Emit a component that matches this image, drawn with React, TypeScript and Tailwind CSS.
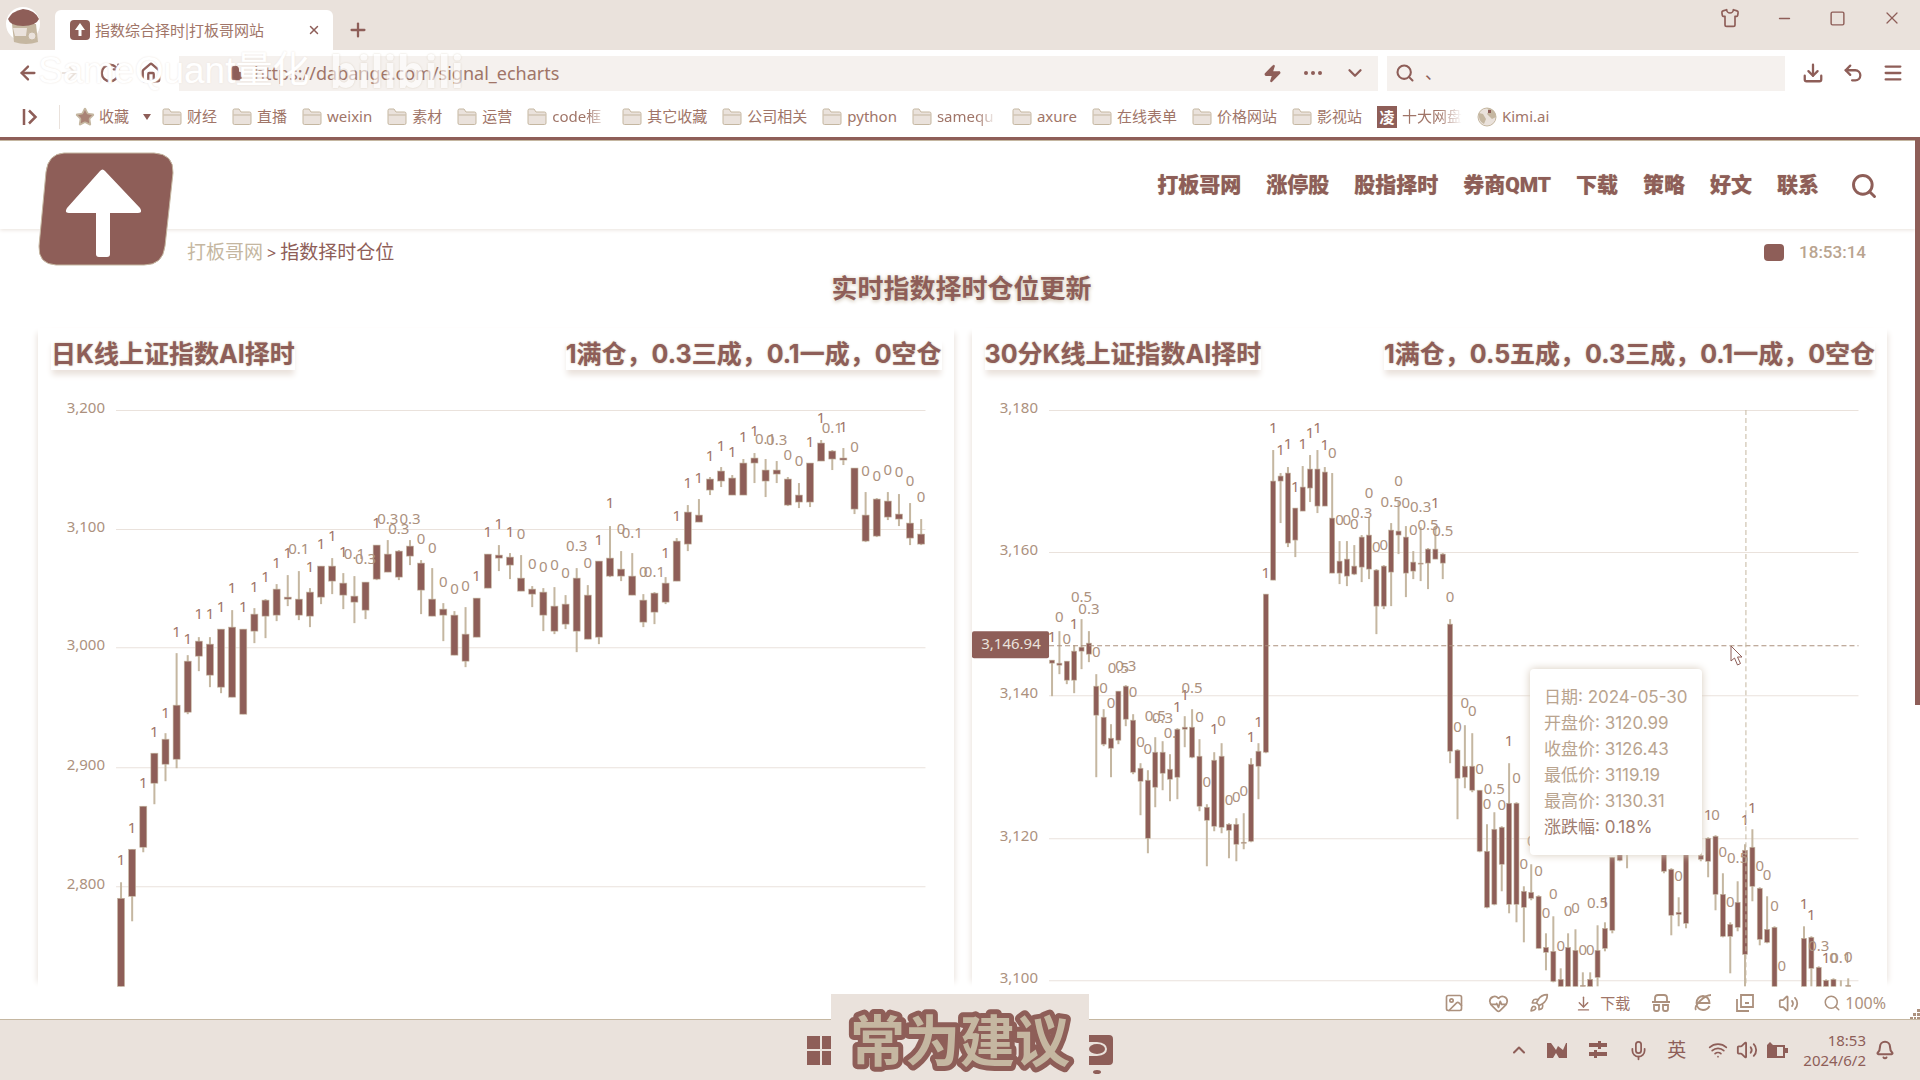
import React from "react";
import {
  ArrowDownToLine,
  ArrowLeft,
  ArrowRight,
  Bell,
  ChevronDown,
  ChevronUp,
  Download,
  HeartPulse,
  Home,
  Image as ImageIcon,
  Lock,
  Menu,
  Mic,
  Minus,
  Plus,
  Rocket,
  RotateCw,
  Search,
  Shirt,
  Square,
  Star,
  Undo2,
  Volume2,
  Wifi,
  X,
  Zap,
} from "lucide-react";

const DARK = "#8e5e58";
const TAN = "#c5b7a1";
const LIGHT = "#eae2dc";
const LABEL = "#ac917e";

// slot, high, open/close top, open/close bottom, low, label, label centre
type Candle = [number, number, number, number, number, string, number];

const daily: Candle[] = [
  [0, 882, 898, 986, 986, "1", 860],
  [1, 849, 849, 896, 921, "1", 828],
  [2, 806, 806, 847, 852, "1", 783],
  [3, 753, 753, 783, 804, "1", 732],
  [4, 733, 739, 764, 781, "1", 713],
  [5, 653, 705, 759, 768, "1", 632],
  [6, 655, 661, 712, 714, "1", 639],
  [7, 637, 641, 656, 671, "1", 614],
  [8, 637, 644, 675, 687, "1", 614],
  [9, 629, 629, 687, 693, "1", 607],
  [10, 610, 627, 697, 697, "1", 588],
  [11, 629, 629, 714, 714, "1", 607],
  [12, 608, 614, 631, 643, "1", 587],
  [13, 599, 600, 616, 638, "1", 577],
  [14, 584, 589, 615, 621, "1", 563],
  [15, 575, 597, 599, 606, "1", 553],
  [16, 571, 599, 615, 620, "0.1", 549],
  [17, 588, 592, 616, 627, "1", 567],
  [18, 566, 566, 597, 604, "1", 544],
  [19, 558, 566, 581, 594, "1", 536],
  [20, 573, 583, 595, 609, "1", 552],
  [21, 576, 596, 602, 623, "0.1", 554],
  [22, 582, 582, 610, 619, "0.3", 559],
  [23, 545, 545, 579, 580, "1", 523],
  [24, 540, 554, 572, 572, "0.3", 519],
  [25, 550, 551, 577, 580, "0.3", 529],
  [26, 540, 546, 556, 565, "0.3", 519],
  [27, 560, 563, 590, 614, "0", 539],
  [28, 568, 599, 616, 616, "0", 548],
  [29, 603, 609, 615, 641, "0", 582],
  [30, 611, 615, 655, 655, "0", 589],
  [31, 607, 634, 661, 667, "0", 586],
  [32, 598, 598, 637, 637, "1", 576],
  [33, 554, 554, 588, 588, "1", 532],
  [34, 545, 555, 558, 571, "1", 524],
  [35, 553, 557, 565, 579, "1", 532],
  [36, 555, 578, 591, 591, "0", 534],
  [37, 586, 589, 594, 607, "0", 564],
  [38, 588, 592, 615, 631, "0", 567],
  [39, 587, 606, 631, 634, "0", 565],
  [40, 595, 604, 624, 629, "0", 573],
  [41, 568, 578, 631, 652, "0.3", 546],
  [42, 585, 595, 639, 639, "0", 563],
  [43, 561, 561, 637, 644, "1", 540],
  [44, 526, 558, 576, 577, "1", 503],
  [45, 551, 569, 576, 581, "0", 529],
  [46, 553, 576, 595, 595, "0.1", 533],
  [47, 594, 600, 622, 627, "0", 572],
  [48, 592, 593, 612, 624, "0.1", 572],
  [49, 577, 583, 602, 604, "1", 553],
  [50, 538, 541, 581, 581, "1", 516],
  [51, 505, 512, 544, 551, "1", 483],
  [52, 499, 515, 522, 522, "1", 478],
  [53, 477, 479, 490, 495, "1", 456],
  [54, 467, 471, 481, 487, "1", 446],
  [55, 475, 478, 495, 495, "1", 452],
  [56, 459, 463, 495, 495, "1", 437],
  [57, 453, 458, 463, 483, "1", 431],
  [58, 459, 470, 481, 497, "0.1", 439],
  [59, 461, 470, 474, 483, "0.3", 440],
  [60, 477, 479, 505, 506, "0", 455],
  [61, 483, 495, 502, 508, "0", 461],
  [62, 463, 463, 502, 507, "1", 442],
  [63, 440, 443, 461, 461, "1", 418],
  [64, 450, 451, 459, 470, "0.1", 428],
  [65, 448, 458, 460, 465, "1", 427],
  [66, 468, 468, 509, 514, "0", 447],
  [67, 492, 515, 541, 542, "0", 471],
  [68, 498, 499, 536, 537, "0", 476],
  [69, 492, 501, 517, 520, "0", 470],
  [70, 494, 514, 519, 526, "0", 472],
  [71, 503, 523, 538, 545, "0", 481],
  [72, 519, 534, 544, 545, "0", 497],
];

const halfHour: Candle[] = [
  [0, 660, 660, 663, 696, "1", 637],
  [1, 631, 663, 665, 674, "0", 617],
  [2, 661, 661, 680, 684, "0", 639],
  [3, 645, 651, 680, 693, "1", 624],
  [4, 619, 647, 651, 669, "0.5", 597],
  [5, 631, 643, 654, 662, "0.3", 609],
  [6, 674, 686, 715, 777, "0", 652],
  [7, 709, 717, 744, 746, "0", 688],
  [8, 724, 738, 748, 777, "0", 703],
  [9, 691, 691, 740, 744, "0.5", 668],
  [10, 685, 686, 719, 726, "0.3", 666],
  [11, 714, 720, 772, 774, "0", 692],
  [12, 763, 768, 781, 815, "0", 742],
  [13, 770, 780, 838, 853, "0", 749],
  [14, 737, 752, 787, 807, "0.5", 716],
  [15, 741, 752, 773, 790, "0.3", 718],
  [16, 754, 769, 779, 801, "0.", 733],
  [17, 728, 729, 777, 799, "1", 707],
  [18, 716, 727, 729, 747, "1", 695],
  [19, 709, 727, 757, 758, "0.5", 688],
  [20, 739, 756, 806, 811, "0", 717],
  [21, 804, 807, 820, 866, "0", 782],
  [22, 752, 760, 826, 831, "1", 729],
  [23, 743, 756, 827, 833, "0", 721],
  [24, 823, 824, 830, 858, "0", 800],
  [25, 818, 824, 844, 861, "0", 797],
  [26, 813, 842, 843, 849, "0", 791],
  [27, 758, 764, 841, 842, "1", 737],
  [28, 743, 751, 766, 799, "1", 722],
  [29, 594, 594, 752, 753, "1", 573],
  [30, 450, 481, 580, 580, "1", 428],
  [31, 473, 476, 481, 523, "1", 450],
  [32, 467, 473, 543, 547, "1", 444],
  [33, 508, 508, 540, 557, "1", 487],
  [34, 466, 487, 511, 511, "1", 444],
  [35, 455, 469, 488, 502, "1", 433],
  [36, 450, 469, 506, 513, "1", 428],
  [37, 467, 472, 506, 506, "1", 445],
  [38, 473, 518, 573, 573, "0", 453],
  [39, 541, 561, 573, 584, "0", 520],
  [40, 541, 559, 576, 586, "0", 520],
  [41, 545, 566, 574, 575, "0", 524],
  [42, 535, 537, 567, 582, "0.3", 513],
  [43, 517, 535, 569, 579, "0", 493],
  [44, 569, 570, 606, 634, "0", 547],
  [45, 565, 566, 606, 609, "0", 545],
  [46, 523, 530, 572, 606, "0.5", 502],
  [47, 502, 531, 535, 554, "0", 481],
  [48, 526, 537, 573, 597, "0", 503],
  [49, 551, 562, 571, 579, "0", 530],
  [50, 527, 563, 564, 581, "0.3", 507],
  [51, 548, 549, 563, 589, "0.5", 525],
  [52, 527, 549, 559, 559, "1", 503],
  [53, 553, 554, 563, 579, "0.5", 531],
  [54, 619, 624, 751, 763, "0", 597],
  [55, 749, 750, 778, 819, "0", 727],
  [56, 725, 766, 777, 788, "0", 703],
  [57, 733, 766, 790, 792, "0", 711],
  [58, 790, 790, 851, 852, "0", 769],
  [59, 824, 851, 907, 908, "0", 804],
  [60, 812, 829, 904, 905, "0.5", 789],
  [61, 826, 827, 864, 891, "0", 805],
  [62, 763, 803, 904, 913, "1", 741],
  [63, 802, 803, 904, 922, "0", 778],
  [64, 886, 891, 907, 942, "0", 864],
  [65, 864, 892, 898, 900, "0", 841],
  [66, 895, 896, 948, 948, "0", 871],
  [67, 933, 947, 952, 970, "0", 913],
  [68, 916, 951, 981, 982, "0", 894],
  [69, 968, 979, 986, 986, "0", 946],
  [70, 933, 947, 986, 986, "0", 911],
  [71, 929, 950, 986, 986, "0", 908],
  [72, 972, 985, 986, 986, "0", 950],
  [73, 972, 979, 986, 986, "0", 950],
  [74, 925, 950, 977, 986, "0.5", 903],
  [75, 922, 928, 948, 951, "1", 902],
  [76, 857, 857, 930, 933, "1", 836],
  [77, 830, 840, 860, 861, "1", 812],
  [78, 820, 840, 850, 868, "1", 800],
  [83, 840, 842, 871, 873, "0", 820],
  [84, 868, 869, 915, 935, "0", 844],
  [85, 897, 912, 914, 926, "0", 876],
  [86, 840, 845, 923, 928, "1", 824],
  [88, 840, 855, 859, 861, "", 820],
  [89, 837, 838, 861, 877, "1", 815],
  [90, 835, 836, 894, 910, "0", 815],
  [91, 873, 894, 936, 937, "0", 852],
  [92, 922, 924, 936, 973, "0", 902],
  [93, 881, 902, 927, 931, "0.5", 858],
  [94, 844, 850, 954, 986, "1", 820],
  [95, 829, 847, 886, 901, "1", 808],
  [96, 887, 888, 939, 945, "0", 866],
  [97, 896, 929, 942, 943, "0", 875],
  [98, 926, 927, 986, 986, "0", 906],
  [99, 986, 986, 986, 986, "0", 966],
  [102, 926, 938, 986, 986, "1", 904],
  [103, 936, 937, 968, 986, "1", 915],
  [104, 966, 967, 986, 986, "0.3", 946],
  [105, 979, 980, 986, 986, "1", 958],
  [106, 978, 979, 986, 986, "0", 958],
  [107, 980, 986, 986, 986, "0.1", 958],
  [108, 978, 985, 986, 986, "0", 957],
];

type ChartProps = {
  name: string;
  viewBox: string;
  data: Candle[];
  start: number;
  pitch: number;
  body: number;
  from: number;
  to: number;
  ticks: [string, number][];
  children?: React.ReactNode;
};

function CandleChart({ name, viewBox, data, start, pitch, body, from, to, ticks, children }: ChartProps) {
  return (
    <svg viewBox={viewBox} role="img" aria-label={name} className="block w-full font-['Noto_Sans'] text-[15px]">
      {ticks.map(([t, y]) => (
        <g key={t}>
          <line x1={from} x2={to} y1={y + 0.5} y2={y + 0.5} stroke={LIGHT} />
          <text x={from - 11} y={y + 3} textAnchor="end" fill={LABEL}>
            {t}
          </text>
        </g>
      ))}
      {data.map(([i, h, a, b, l]) => {
        const x = start + i * pitch;
        return (
          <g key={i}>
            {l > h && <rect x={x - 1} y={h} width={2} height={l - h} fill={TAN} />}
            {b > a && (
              <rect x={x - body / 2} y={a} width={body} height={b - a} fill={DARK} stroke={TAN} strokeWidth={0.6} />
            )}
          </g>
        );
      })}
      {data.map(([i, , , , , t, y]) =>
        t ? (
          <text key={i} x={start + i * pitch} y={y + 5} textAnchor="middle" fill={t === "1" ? "#a07568" : LABEL}>
            {t}
          </text>
        ) : null,
      )}
      {children}
    </svg>
  );
}

function FolderIcon() {
  return (
    <svg viewBox="0 0 20 20" className="h-5 w-5 shrink-0" aria-hidden="true">
      <path d="M1 3.5Q1 2 2.500 2H7l2 3h8.500Q19 5 19 6.500V16q0 1.500-1.500 1.500h-15Q1 17.500 1 16Z" fill={LIGHT} stroke={TAN} />
      <path d="M1.500 8H18.500" stroke={TAN} />
    </svg>
  );
}

function UpArrowBadge({ className }: { className: string }) {
  return (
    <svg viewBox="0 0 136 114" preserveAspectRatio="none" className={className} aria-hidden="true">
      <path
        d="M26 1H116Q136 2 135 21L127 94Q125 113 106 113H18Q0 112 1 94L8 20Q10 2 26 1Z"
        fill={DARK}
        stroke={TAN}
      />
      <path
        d="M62 19q2.500-3 5 0l35 37q3 5-2 5H72v41q0 3-3 3h-8q-3 0-3-3V61H31q-5 0-2-5Z"
        fill="#fff"
      />
    </svg>
  );
}

const folders: { t: string; w?: string }[] = [
  { t: "财经" },
  { t: "直播" },
  { t: "weixin" },
  { t: "素材" },
  { t: "运营" },
  { t: "code框", w: "w-[55px]" },
  { t: "其它收藏" },
  { t: "公司相关" },
  { t: "python" },
  { t: "samequ", w: "w-[60px]" },
  { t: "axure" },
  { t: "在线表单" },
  { t: "价格网站" },
  { t: "影视站" },
];

const nav = ["打板哥网", "涨停股", "股指择时", "券商QMT", "下载", "策略", "好文", "联系"];

const tooltip = [
  "日期: 2024-05-30",
  "开盘价: 3120.99",
  "收盘价: 3126.43",
  "最低价: 3119.19",
  "最高价: 3130.31",
  "涨跌幅: 0.18%",
];

function IconButton({ label, className = "", children }: { label: string; className?: string; children: React.ReactNode }) {
  return (
    <button type="button" aria-label={label} className={`flex shrink-0 items-center justify-center ${className}`}>
      {children}
    </button>
  );
}

function TitleBar() {
  return (
    <div className="flex h-[50px] shrink-0 items-end bg-[#eae2dc]">
      <svg viewBox="0 0 36 40" className="mb-1 ml-1.5 h-10 w-9" aria-hidden="true">
        <circle cx="17" cy="18" r="17" fill="#fff" />
        <path d="M6 18h24l2 18q-12 4-24 0Z" fill={TAN} />
        <path d="M7 22h14l-1 8H9Z" fill={LIGHT} />
        <circle cx="26" cy="30" r="4" fill={LIGHT} stroke={TAN} />
        <path d="M2 13Q6 5 17 3q12 1 16 10-3 7-16 7T2 13Z" fill={DARK} />
      </svg>
      <div className="ml-[13px] flex h-10 w-[278px] items-center rounded-t-md bg-white pl-[15px] pr-3">
        <span className="flex h-5 w-5 items-center justify-center rounded-sm bg-[#8e5e58]">
          <svg viewBox="0 0 12 14" className="h-3.5 w-3" aria-hidden="true">
            <path d="M6 0l5 7H7.500v6h-3V7H1Z" fill="#fff" />
          </svg>
        </span>
        <span className="ml-[5px] flex-1 whitespace-nowrap font-['Noto_Sans_CJK_SC'] text-[15px] text-[#a07568]">
          指数综合择时|打板哥网站
        </span>
        <IconButton label="关闭标签页">
          <X size={14} strokeWidth={2.500} />
        </IconButton>
      </div>
      <IconButton label="新标签页" className="ml-3.5 h-10">
        <Plus size={22} strokeWidth={2.500} />
      </IconButton>
      <div className="ml-auto mr-[18px] flex items-center gap-9 self-start pt-2">
        <IconButton label="皮肤">
          <Shirt size={20} />
        </IconButton>
        <IconButton label="最小化">
          <Minus size={17} />
        </IconButton>
        <IconButton label="最大化">
          <Square size={17} />
        </IconButton>
        <IconButton label="关闭">
          <X size={20} strokeWidth={1.500} />
        </IconButton>
      </div>
    </div>
  );
}

function Toolbar() {
  return (
    <div className="relative flex h-[46px] shrink-0 items-center">
      <div className="flex items-center gap-[19px] pl-[17px]">
        <IconButton label="后退">
          <ArrowLeft size={22} strokeWidth={2.500} />
        </IconButton>
        <IconButton label="前进" className="text-[#eae2dc]">
          <ArrowRight size={22} />
        </IconButton>
        <IconButton label="刷新">
          <RotateCw size={22} strokeWidth={2.500} />
        </IconButton>
        <IconButton label="主页">
          <Home size={22} strokeWidth={2.500} />
        </IconButton>
      </div>
      <div className="ml-[17px] flex h-[35px] flex-1 items-center bg-[#f5f1ee] pl-12 pr-3">
        <Lock size={16} fill={DARK} />
        <input
          aria-label="网址"
          defaultValue="https://dabange.com/signal_echarts"
          className="ml-[11px] min-w-0 flex-1 bg-transparent text-[18px] text-[#a07568] outline-none"
        />
        <div className="flex items-center gap-[22px]">
          <IconButton label="极速模式">
            <Zap size={19} fill={DARK} />
          </IconButton>
          <IconButton label="更多">
            <svg viewBox="0 0 18 4" className="h-1 w-[18px]" fill={DARK}>
              <circle cx="2" cy="2" r="2" />
              <circle cx="9" cy="2" r="2" />
              <circle cx="16" cy="2" r="2" />
            </svg>
          </IconButton>
          <IconButton label="展开">
            <ChevronDown size={22} strokeWidth={2.500} />
          </IconButton>
        </div>
      </div>
      <div className="ml-[9px] flex h-[35px] w-[398px] items-center bg-[#f5f1ee] pl-2">
        <Search size={20} strokeWidth={2.500} />
        <input aria-label="搜索" defaultValue="、" className="ml-2.5 min-w-0 flex-1 bg-transparent text-[17px] outline-none" />
      </div>
      <div className="ml-[17px] mr-4 flex items-center gap-[18px]">
        <IconButton label="下载管理">
          <Download size={22} strokeWidth={2.500} />
        </IconButton>
        <IconButton label="恢复">
          <Undo2 size={22} strokeWidth={2.500} />
        </IconButton>
        <IconButton label="菜单">
          <Menu size={22} strokeWidth={2.500} />
        </IconButton>
      </div>
      <div className="pointer-events-none absolute -top-3.5 left-[38px] flex items-center gap-5 whitespace-nowrap leading-[70px] text-white">
        <span className="font-['Liberation_Sans','Noto_Sans_CJK_SC'] text-[37px] [text-shadow:0_0_2px_#eae2dc]">SameQuant量化</span>
        <span className="text-[44px] font-bold opacity-60 [text-shadow:0_0_2px_#c5b7a1]">bilibili</span>
      </div>
    </div>
  );
}

function BookmarkBar() {
  return (
    <div className="flex h-[41px] shrink-0 items-center gap-[15px] whitespace-nowrap pl-[22px] text-[15px] text-[#a07568]">
      <IconButton label="侧栏">
        <svg viewBox="0 0 16 18" className="h-[18px] w-4" fill="none" stroke={DARK} strokeWidth="2.500">
          <path d="M2 1v16M7 2.500 13.500 9 7 15.500" />
        </svg>
      </IconButton>
      <span className="ml-1.5 h-6 w-px bg-[#eae2dc]" />
      <a href="#fav" className="flex items-center gap-1">
        <Star size={20} fill="#a98376" color={TAN} />
        收藏
        <svg viewBox="0 0 8 6" className="ml-2.5 h-1.5 w-2" fill={DARK}>
          <path d="M0 0h8L4 6Z" />
        </svg>
      </a>
      {folders.map((f, i) => (
        <a key={f.t} href="#folder" className={i === 0 ? "-ml-1 flex items-center gap-[5px]" : "flex items-center gap-[5px]"}>
          <FolderIcon />
          <span className={f.w ? `${f.w} overflow-hidden [mask-image:linear-gradient(to_right,#000_65%,transparent)]` : ""}>
            {f.t}
          </span>
        </a>
      ))}
      <a href="#cloud" className="flex items-center gap-[5px]">
        <span className="flex h-[22px] w-5 items-center justify-center bg-[#8e5e58] font-['Noto_Sans_CJK_SC'] text-[15px] font-bold leading-5 text-white">
          凌
        </span>
        <span className="[mask-image:linear-gradient(to_right,#000_60%,transparent)]">十大网盘</span>
      </a>
      <a href="#kimi" className="flex items-center gap-[5px]">
        <svg viewBox="0 0 20 20" className="h-5 w-5" aria-hidden="true">
          <circle cx="10" cy="10" r="9" fill={LIGHT} stroke={TAN} />
          <path d="M10 1q9 1 9 9l-4 2-5-5 2-3ZM2 6l4 1 3 5-2 5Q1 14 2 6Z" fill={TAN} />
          <path d="M11 3h3v3h-3Z" fill={DARK} />
        </svg>
        Kimi.ai
      </a>
    </div>
  );
}

function CardHeading({ left, right }: { left: string; right: string }) {
  return (
    <div className="flex h-[52px] items-center justify-between pl-[13px] pr-3 font-['Inter','Noto_Sans_CJK_SC',sans-serif] text-[25px] font-bold leading-8 [text-shadow:0_0_2px_#c5b7a1]">
      <h2 className="shadow-[0_6px_6px_-1px_#eae2dc]">{left}</h2>
      <p className="shadow-[0_6px_6px_-1px_#eae2dc]">{right}</p>
    </div>
  );
}

function Page() {
  return (
    <div className="flex min-h-0 flex-1 border-t-[3px] border-[#8e5e58]">
      <main className="min-w-0 flex-1 overflow-hidden border-t border-[#c5b7a1]">
        <header className="flex h-[88px] items-center justify-end pl-[38px] pr-[37px] shadow-[0_1px_4px_#eae2dc]">
          <a href="#home" aria-label="打板哥" className="relative mr-auto mt-1 h-16 w-[136px]">
            <UpArrowBadge className="absolute -top-[3px] left-0 h-[114px] w-[136px]" />
          </a>
          <nav className="mt-0.5 flex items-center gap-[25px] font-['Roboto','Noto_Sans_CJK_SC',sans-serif] text-[21px] font-black [text-shadow:0_0_1px_#c5b7a1]">
            {nav.map((n) => (
              <a key={n} href="#nav">
                {n}
              </a>
            ))}
            <IconButton label="站内搜索" className="ml-1.5">
              <Search size={28} strokeWidth={2.500} />
            </IconButton>
          </nav>
        </header>
        <div className="flex h-[47px] items-center pl-[187px] pr-[49px]">
          <p className="flex items-center gap-1 text-[19px]">
            <a href="#home" className="text-[#c5b7a1]">
              打板哥网
            </a>
            <span className="text-base">&gt;</span>
            <span>指数择时仓位</span>
          </p>
          <span className="ml-auto h-[17px] w-5 rounded-sm bg-[#8e5e58]" />
          <time className="ml-[15px] font-['Roboto'] text-[17px] font-medium text-[#b9a48f]">18:53:14</time>
        </div>
        <h1 className="h-[52px] pl-2 text-center text-[26px] font-bold leading-6 [text-shadow:0_1px_4px_#c5b7a1]">
          实时指数择时仓位更新
        </h1>
        <div className="grid grid-cols-2 gap-[18px] pl-[38px] pr-7">
          <section className="shadow-[6px_0_6px_-5px_#eae2dc,-6px_0_6px_-5px_#eae2dc]">
            <CardHeading left="日K线上证指数AI择时" right="1满仓，0.3三成，0.1一成，0空仓" />
            <CandleChart
              name="日K线上证指数"
              viewBox="38 380 915 607"
              data={daily}
              start={121}
              pitch={11.107}
              body={7}
              from={116}
              to={925}
              ticks={[
                ["3,200", 410],
                ["3,100", 529],
                ["3,000", 647],
                ["2,900", 767],
                ["2,800", 886],
              ]}
            />
          </section>
          <section className="shadow-[6px_0_6px_-5px_#eae2dc,-6px_0_6px_-5px_#eae2dc]">
            <CardHeading left="30分K线上证指数AI择时" right="1满仓，0.5五成，0.3三成，0.1一成，0空仓" />
            <div className="relative">
              <CandleChart
                name="30分K线上证指数"
                viewBox="972 380 915 607"
                data={halfHour}
                start={1052}
                pitch={7.368}
                body={5}
                from={1049}
                to={1858}
                ticks={[
                  ["3,180", 410],
                  ["3,160", 552],
                  ["3,140", 695],
                  ["3,120", 838],
                  ["3,100", 980],
                ]}
              >
                <path d="M1049 645.500H1858" stroke={LABEL} strokeDasharray="5 3" />
                <path d="M1745.500 410V986" stroke={TAN} strokeDasharray="5 3" />
                <rect x="972" y="631" width="77" height="27" rx="2" fill={DARK} />
                <text x="1011" y="649" textAnchor="middle" fill="#eae2dc" className="text-[15px]">
                  3,146.94
                </text>
              </CandleChart>
              <div className="absolute left-[61%] top-[47.6%] rounded bg-white px-3.5 py-[15px] font-['Inter','Noto_Sans_CJK_SC',sans-serif] text-[17px] leading-[26px] text-[#b9a48f] shadow-[0_0_8px_#d6cabb]">
                {tooltip.map((t) => (
                  <p key={t} className="whitespace-nowrap last:text-[#a07d70]">
                    {t}
                  </p>
                ))}
              </div>
              <svg viewBox="0 0 14 22" className="absolute left-[82.8%] top-[43.7%] h-[22px] w-3.5" aria-hidden="true">
                <path d="M1 1v15l3.500-3 3 7 3-1.500-3-6.500H12Z" fill="#fff" stroke={DARK} />
              </svg>
            </div>
          </section>
        </div>
      </main>
      <div className="w-[5px] shrink-0">
        <div className="h-2/3 bg-[#8e5e58]" />
      </div>
    </div>
  );
}

function StatusBar() {
  return (
    <footer className="relative flex h-[33px] shrink-0 items-center justify-end gap-5 border-b border-[#c5b7a1] bg-white pr-[34px] text-base text-[#ac917e]">
      <IconButton label="图片">
        <ImageIcon size={20} />
      </IconButton>
      <IconButton label="健康" className="ml-1">
        <HeartPulse size={21} />
      </IconButton>
      <IconButton label="加速">
        <Rocket size={20} />
      </IconButton>
      <button type="button" className="ml-1.5 flex items-center gap-2 text-[15px] text-[#a07568]">
        <ArrowDownToLine size={17} />
        下载
      </button>
      <IconButton label="无痕" className="ml-0.5">
        <svg viewBox="0 0 18 18" className="h-[18px] w-[18px]" fill="none" stroke={LABEL} strokeWidth="1.800">
          <path d="M3 8V4q0-3 3-3h6q3 0 3 3v4M0 8h18M2 11h5v4q0 2-2 2H4q-2 0-2-2ZM11 11h5v4q0 2-2 2h-1q-2 0-2-2Z" />
        </svg>
      </IconButton>
      <IconButton label="内核" className="ml-1">
        <svg viewBox="0 0 18 18" className="h-[18px] w-[18px]" fill="none" stroke={LABEL} strokeWidth="1.800">
          <path d="M15.500 12q-2 4-6.500 4-6-.500-6.500-7Q3 2.500 9 2q6 .500 6.500 7h-12M2 16Q0 13 6 7t11-6" />
        </svg>
      </IconButton>
      <IconButton label="窗口" className="ml-1">
        <svg viewBox="0 0 18 18" className="h-[18px] w-[18px]" fill="none" stroke={LABEL} strokeWidth="1.800">
          <path d="M5 1h12v12H5ZM1 5v12h12M9 9h4" />
        </svg>
      </IconButton>
      <IconButton label="声音" className="ml-1">
        <Volume2 size={21} />
      </IconButton>
      <button type="button" className="ml-1 flex items-center gap-1">
        <Search size={18} />
        100%
      </button>
      <svg viewBox="0 0 10 10" className="absolute bottom-0 right-0 h-2.5 w-2.5" fill={LABEL} aria-hidden="true">
        <path d="M7 0h3v3H7ZM3 4h3v3H3ZM7 4h3v3H7ZM0 8h3v2H0ZM4 8h2v2H4ZM7 8h3v2H7Z" />
      </svg>
    </footer>
  );
}

function Taskbar() {
  return (
    <div className="relative flex h-[60px] shrink-0 items-center bg-[#eae2dc]">
      <div className="absolute inset-x-0 bottom-0 flex items-end justify-center">
        <IconButton label="开始" className="mb-[15px]">
          <svg viewBox="0 0 24 29" className="h-[29px] w-6" fill={DARK}>
            <path d="M0 0h13v13H0ZM15 0h9v13h-9ZM0 15h13v14H0ZM15 15h9v14h-9Z" />
          </svg>
        </IconButton>
        <svg viewBox="0 0 258 86" className="h-[86px] w-[258px] bg-[#eae2dc]">
          <text
            x="129"
            y="67"
            textAnchor="middle"
            fill={TAN}
            stroke={DARK}
            strokeWidth="10"
            strokeLinejoin="round"
            paintOrder="stroke"
            className="font-['Noto_Sans_CJK_SC'] text-[55px] font-bold"
          >
            常为建议
          </text>
        </svg>
        <IconButton label="浏览器" className="mb-[5px]">
          <svg viewBox="0 0 24 40" className="h-10 w-6" fill={DARK}>
            <path d="M0 0h20q4 0 4 4v22q0 4-4 4H0v-9h8q10-1 10-7T8 7H0Z" />
            <ellipse cx="8" cy="14" rx="8" ry="5" />
            <ellipse cx="8" cy="37" rx="4" ry="2" />
          </svg>
        </IconButton>
      </div>
      <div className="ml-auto mr-[25px] flex items-center">
        <IconButton label="显示隐藏的图标" className="mr-[18px]">
          <ChevronUp size={20} strokeWidth={2.500} />
        </IconButton>
        <svg viewBox="0 0 20 16" className="mr-[21px] h-4 w-5" fill={DARK} aria-hidden="true">
          <path d="M0 1h4l5 7 2-4 5 4 3-7h1v15H12L9 11l-3 5H0Z" />
        </svg>
        <svg viewBox="0 0 20 18" className="mr-5 h-[18px] w-5" fill={DARK} aria-hidden="true">
          <path d="M1 2h9V0h3v2h6v4h-6v2h-3V6H1ZM1 11h5V9h3v2h10v4H9v2H6v-2H1Z" />
        </svg>
        <Mic size={21} className="mr-[18px]" />
        <span className="mr-[22px] text-[19px] leading-6">英</span>
        <Wifi size={20} className="mr-2" />
        <Volume2 size={22} className="mr-2" />
        <svg viewBox="0 0 22 16" className="mr-[15px] h-4 w-[22px]" aria-hidden="true">
          <path d="M1 3 4 0l3 3h12v3h3v5h-3v5H1Z" fill={DARK} />
          <rect x="11" y="5" width="6" height="9" fill={LIGHT} />
        </svg>
        <p className="mr-[9px] text-right text-[15px] leading-5">
          18:53
          <br />
          2024/6/2
        </p>
        <Bell size={20} strokeWidth={2.500} />
      </div>
    </div>
  );
}

export default function App() {
  return (
    <div className="flex h-screen flex-col overflow-hidden bg-white font-['Noto_Sans','Noto_Sans_CJK_SC',sans-serif] text-[#8e5e58]">
      <TitleBar />
      <Toolbar />
      <BookmarkBar />
      <Page />
      <StatusBar />
      <Taskbar />
    </div>
  );
}
